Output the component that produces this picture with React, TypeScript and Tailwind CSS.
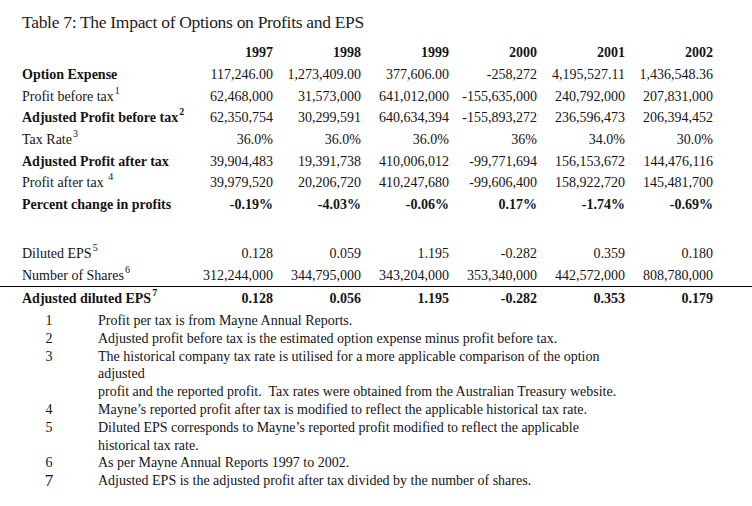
const years = ["1997", "1998", "1999", "2000", "2001", "2002"]

type Row = { label: string; sup?: string; bold?: boolean; boldValues?: boolean; values: string[] }

const topRows: Row[] = [
  { label: "Option Expense", bold: true, values: ["117,246.00", "1,273,409.00", "377,606.00", "-258,272", "4,195,527.11", "1,436,548.36"] },
  { label: "Profit before tax", sup: "1", values: ["62,468,000", "31,573,000", "641,012,000", "-155,635,000", "240,792,000", "207,831,000"] },
  { label: "Adjusted Profit before tax", sup: "2", bold: true, values: ["62,350,754", "30,299,591", "640,634,394", "-155,893,272", "236,596,473", "206,394,452"] },
  { label: "Tax Rate", sup: "3", values: ["36.0%", "36.0%", "36.0%", "36%", "34.0%", "30.0%"] },
  { label: "Adjusted Profit after tax", bold: true, values: ["39,904,483", "19,391,738", "410,006,012", "-99,771,694", "156,153,672", "144,476,116"] },
  { label: "Profit after tax ", sup: "4", values: ["39,979,520", "20,206,720", "410,247,680", "-99,606,400", "158,922,720", "145,481,700"] },
  { label: "Percent change in profits", bold: true, boldValues: true, values: ["-0.19%", "-4.03%", "-0.06%", "0.17%", "-1.74%", "-0.69%"] },
]

const epsRows: Row[] = [
  { label: "Diluted EPS", sup: "5", values: ["0.128", "0.059", "1.195", "-0.282", "0.359", "0.180"] },
  { label: "Number of Shares", sup: "6", values: ["312,244,000", "344,795,000", "343,204,000", "353,340,000", "442,572,000", "808,780,000"] },
]

const adjustedEps: Row = {
  label: "Adjusted diluted EPS",
  sup: "7",
  bold: true,
  boldValues: true,
  values: ["0.128", "0.056", "1.195", "-0.282", "0.353", "0.179"],
}

const notes: { n: string; lines: string[]; big?: boolean }[] = [
  { n: "1", lines: ["Profit per tax is from Mayne Annual Reports."] },
  { n: "2", lines: ["Adjusted profit before tax is the estimated option expense minus profit before tax."] },
  {
    n: "3",
    lines: [
      "The historical company tax rate is utilised for a more applicable comparison of the option",
      "adjusted",
      "profit and the reported profit.  Tax rates were obtained from the Australian Treasury website.",
    ],
  },
  { n: "4", lines: ["Mayne\u2019s reported profit after tax is modified to reflect the applicable historical tax rate."] },
  { n: "5", lines: ["Diluted EPS corresponds to Mayne\u2019s reported profit modified to reflect the applicable", "historical tax rate."] },
  { n: "6", lines: ["As per Mayne Annual Reports 1997 to 2002."] },
  { n: "7", lines: ["Adjusted EPS is the adjusted profit after tax divided by the number of shares."], big: true },
]

function TableRow({ row }: { row: Row }) {
  return (
    <div className="grid h-[21.7px] grid-cols-[163px_repeat(6,88px)] items-center pl-[22px]">
      <div className={`whitespace-nowrap ${row.bold ? "font-bold" : ""}`}>
        {row.label}
        {row.sup && <sup className="relative -top-[7px] ml-[1px] text-[10px]">{row.sup}</sup>}
      </div>
      {row.values.map((v, i) => (
        <div key={i} className={`text-right ${row.boldValues ? "font-bold" : ""}`}>
          {v}
        </div>
      ))}
    </div>
  )
}

export default function App() {
  return (
    <div className="h-[506px] w-[752px] overflow-hidden bg-white text-[14px] text-[#141414] [font-family:'Liberation_Serif','Times_New_Roman',serif]">
      <h1 className="pl-[22px] pt-[10px] text-[17.5px] leading-[24px] tracking-[-0.3px] text-[#222]">
        Table 7: The Impact of Options on Profits and EPS
      </h1>

      <div className="mt-[8px] grid h-[21.7px] grid-cols-[163px_repeat(6,88px)] items-center pl-[22px] font-bold">
        <div />
        {years.map((y) => (
          <div key={y} className="text-right">
            {y}
          </div>
        ))}
      </div>

      {topRows.map((r) => (
        <TableRow key={r.label} row={r} />
      ))}

      <div className="h-[27px]" />

      {epsRows.map((r) => (
        <TableRow key={r.label} row={r} />
      ))}

      <div className="h-[1.5px] w-full bg-black" />

      <TableRow row={adjustedEps} />

      <div className="mt-[3px]">
        {notes.map((note) => (
          <div key={note.n} className="flex">
            <div className={`w-[98px] shrink-0 text-center leading-[17.8px] ${note.big ? "text-[17px]" : ""}`}>
              {note.n}
            </div>
            <div className="leading-[17.8px]">
              {note.lines.map((l, i) => (
                <div key={i} className="whitespace-pre">
                  {l}
                </div>
              ))}
            </div>
          </div>
        ))}
      </div>
    </div>
  )
}
